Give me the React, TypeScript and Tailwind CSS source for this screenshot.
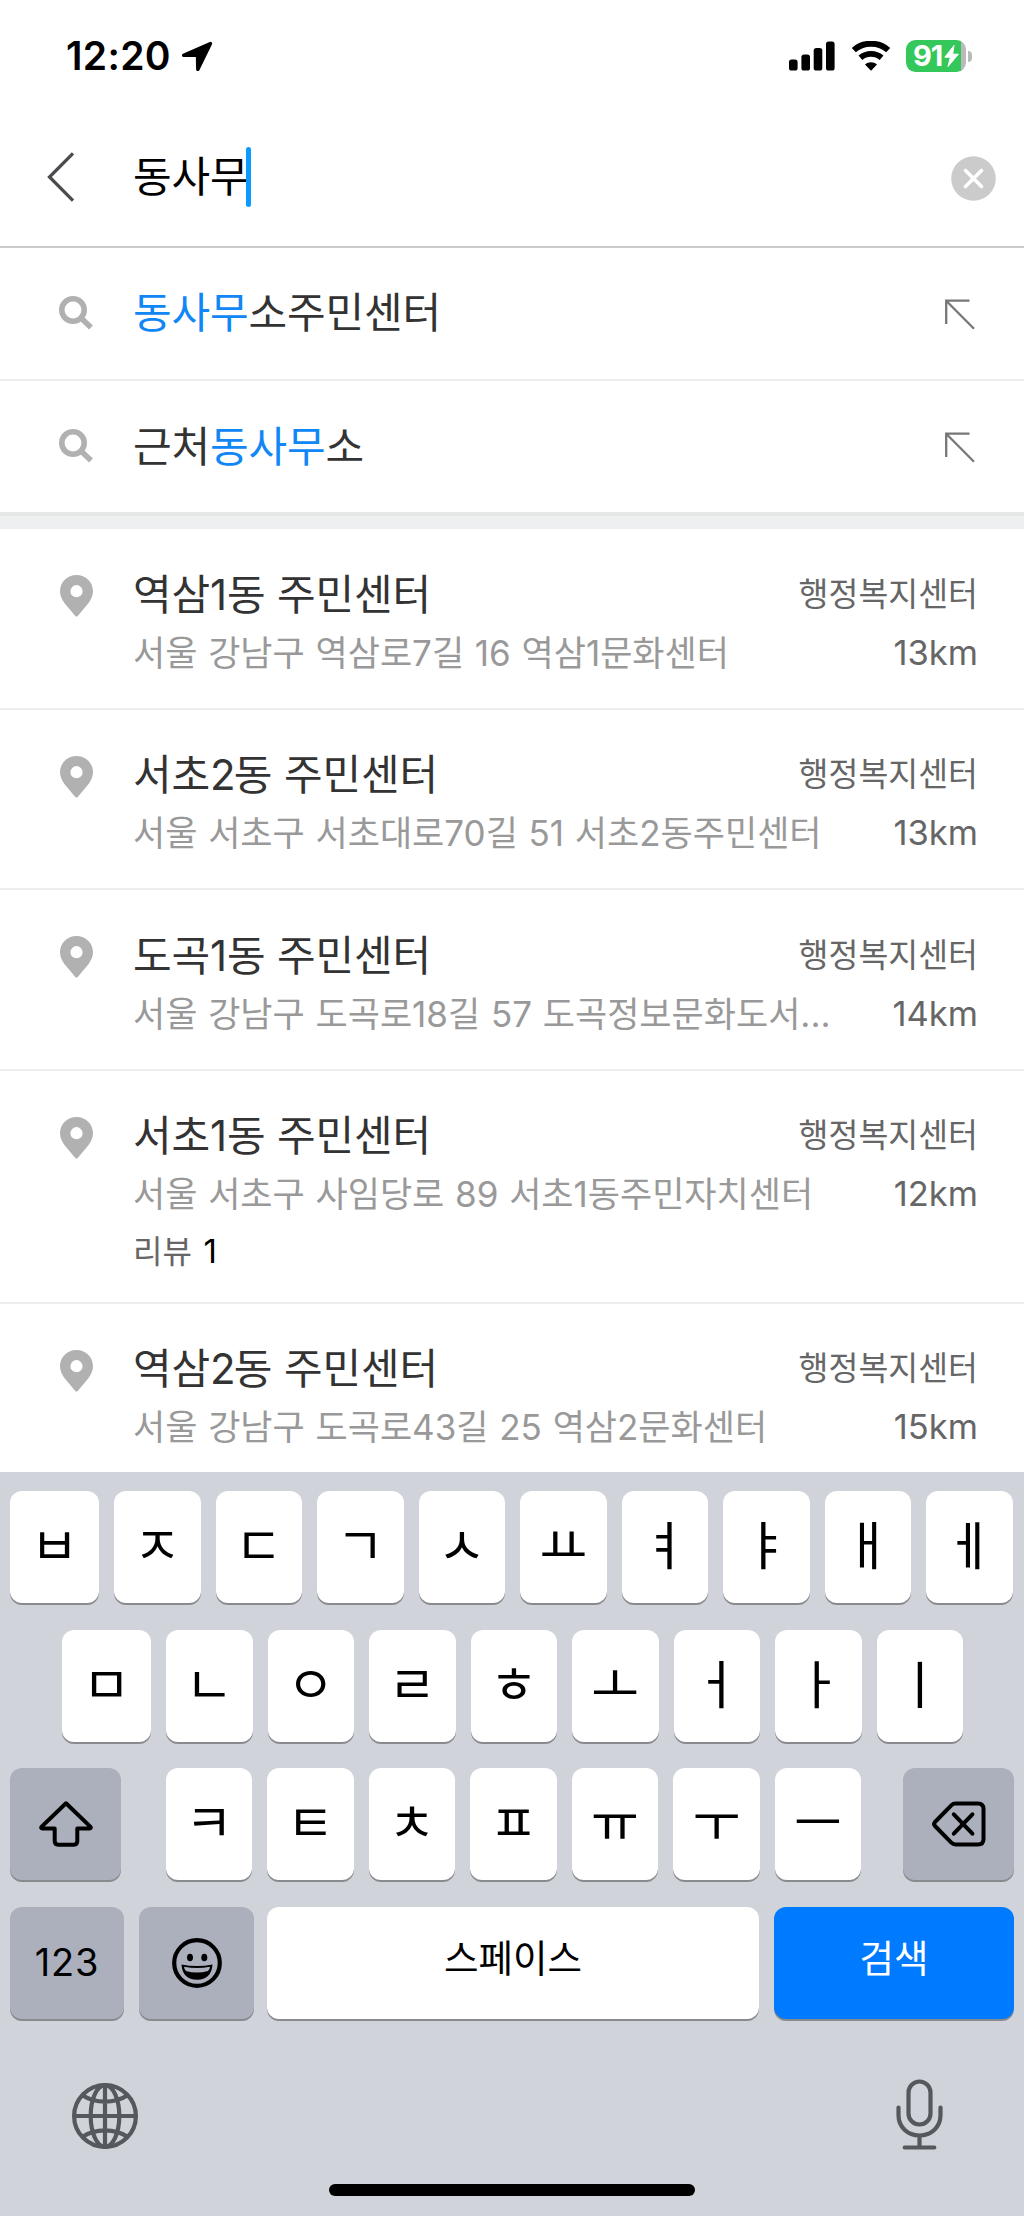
import React from "react";

type Place = {
  name: string;
  address: string;
  distance: string;
  reviews?: number;
};

const places: Place[] = [
  { name: "역삼1동 주민센터", address: "서울 강남구 역삼로7길 16 역삼1문화센터", distance: "13km" },
  { name: "서초2동 주민센터", address: "서울 서초구 서초대로70길 51 서초2동주민센터", distance: "13km" },
  { name: "도곡1동 주민센터", address: "서울 강남구 도곡로18길 57 도곡정보문화도서...", distance: "14km" },
  { name: "서초1동 주민센터", address: "서울 서초구 사임당로 89 서초1동주민자치센터", distance: "12km", reviews: 1 },
  { name: "역삼2동 주민센터", address: "서울 강남구 도곡로43길 25 역삼2문화센터", distance: "15km" },
];

const suggestions = [
  [
    { text: "동사무", hit: true },
    { text: "소주민센터", hit: false },
  ],
  [
    { text: "근처", hit: false },
    { text: "동사무", hit: true },
    { text: "소", hit: false },
  ],
];

function StatusBar() {
  return (
    <div className="flex h-[112px] items-start justify-between pl-[66px] pr-[52px] pt-[36px]">
      <div className="flex h-10 items-center">
        <span className="w-[115px] whitespace-nowrap text-[39px] font-semibold leading-10 tracking-[0.3px] text-black">12:20</span>
        <svg width="32" height="32" viewBox="0 0 32 32" className="mt-px">
          <path d="M29.5 2.5 2.6 14.4h13.9l.3 14L29.5 2.5z" fill="#000" stroke="#000" strokeWidth="3.4" strokeLinejoin="round" />
        </svg>
      </div>
      <div className="flex h-10 items-center">
        <svg width="46" height="30" viewBox="0 0 46 30" className="mr-4">
          <rect x="0" y="18.5" width="8.6" height="11" rx="2.6" />
          <rect x="12.4" y="13.5" width="8.6" height="16" rx="2.6" />
          <rect x="24.7" y="7" width="8.6" height="22.500" rx="2.6" />
          <rect x="37" y="0.500" width="8.6" height="29" rx="2.6" />
        </svg>
        <svg width="40" height="30" viewBox="0 0 40 30" className="mr-[15px]">
          <path d="M2.800 9.100 C12 .6 28 .6 37.200 9.100" fill="none" stroke="#000" strokeWidth="6" />
          <path d="M9.400 16.700 C15.500 11.500 24.500 11.500 30.600 16.700" fill="none" stroke="#000" strokeWidth="5.800" />
          <path d="M14 23.600C17.500 20.400 22.500 20.400 26 23.600L20 29.800Z" />
        </svg>
        <div className="flex h-8 w-[60px] items-center rounded-[9.500px] bg-[linear-gradient(to_right,#34c759_0_55px,#b9bbbb_55px)] pl-[7px]">
          <span className="w-[31px] whitespace-nowrap text-[29px] font-bold leading-8 tracking-[-1px] text-white">91</span>
          <svg width="15" height="22" viewBox="0 0 15 22">
            <path d="M10 .5.800 12.200h5.600L4 21.500 14.400 9.200H8.600z" fill="#fff" stroke="#fff" strokeLinejoin="round" />
          </svg>
        </div>
        <div className="ml-[2px] h-[11px] w-[4px] rounded-r-full bg-[#b9bbbb]" />
      </div>
    </div>
  );
}

function SearchHeader() {
  return (
    <div className="flex h-[136px] items-center border-b-2 border-[#cbcbcb] pb-[4px] pl-[46px] pr-[28px]">
      <svg width="30" height="52" viewBox="0 0 30 52" className="mr-[57px]">
        <path d="M27 2.300 3.500 26 27 49.700" fill="none" stroke="#4b4c50" strokeWidth="3.300" />
      </svg>
      <div className="flex flex-1 items-center">
        <span className="w-[113px] whitespace-nowrap text-[42px] leading-[60px] tracking-[-0.140px] text-black">동사무</span>
        <span className="h-[60px] w-[5px] rounded-full bg-[#0a9bff]" />
      </div>
      <svg width="45" height="45" viewBox="0 0 45 45" className="mt-[3px]">
        <circle cx="22.500" cy="22.500" r="22.300" fill="#cbcbcb" />
        <path d="m14.500 14.500 16 16m0-16-16 16" stroke="#fff" strokeWidth="3.600" strokeLinecap="round" />
      </svg>
    </div>
  );
}

function SuggestionRow({ parts, last }: { parts: { text: string; hit: boolean }[]; last: boolean }) {
  return (
    <div className={`flex items-center pl-[59px] pr-[48px] ${last ? "h-[131px]" : "h-[133.500px] border-b-[2.500px] border-[#ededee]"}`}>
      <svg width="35" height="35" viewBox="0 0 35 35" className="mr-[39px]">
        <circle cx="14" cy="14" r="11.200" fill="none" stroke="#b1b1b1" strokeWidth="5.600" />
        <path d="m22 22 10 9.600" stroke="#b1b1b1" strokeWidth="5.600" />
      </svg>
      <span className="flex-1 whitespace-nowrap text-[42px] leading-[60px] tracking-[-0.140px] text-[#333]">
        {parts.map((p, i) => (
          <span key={i} className={p.hit ? "text-[#1187f5]" : ""}>{p.text}</span>
        ))}
      </span>
      <svg width="32" height="32" viewBox="0 0 32 32" className="mt-[3px]">
        <path d="M25.500 1.700H2.200V25M2.200 1.700 30 29.800" fill="none" stroke="#777" strokeWidth="2.300" />
      </svg>
    </div>
  );
}

function PlaceName({ name }: { name: string }) {
  return (
    <span className="text-[42px] leading-[58px] tracking-[-0.150px] text-[#333]">
      {name.split(/(2)/).map((part, i) => (
        <span key={i} className={part === "2" ? "tracking-[-1.800px]" : ""}>{part}</span>
      ))}
    </span>
  );
}

function PlaceRow({ place }: { place: Place }) {
  return (
    <div
      className={`flex shrink-0 border-b-[2.500px] border-[#ededee] pl-[60px] pr-[46px] pt-[36.500px] ${place.reviews ? "h-[233px]" : "h-[180.500px]"}`}
    >
      <svg width="33" height="42" viewBox="0 0 33 42" className="mr-[40px] mt-[9.500px] shrink-0">
        <path
          d="M16.500 0C7.300 0 0 7.200 0 16.200c0 4.600 2 8.400 4.600 12L15.300 41q1.200 1 2.400 0L28.400 28.200c2.600-3.600 4.600-7.400 4.600-12C33 7.200 25.700 0 16.500 0Zm0 10.100a6.100 6.100 0 1 1 0 12.200a6.100 6.100 0 0 1 0-12.200Z"
          fill="#b1b1b1"
        />
      </svg>
      <div className="flex-1 whitespace-nowrap">
        <div className="flex justify-between">
          <PlaceName name={place.name} />
          <span className="text-[32.500px] leading-[58px] text-[#666]">행정복지센터</span>
        </div>
        <div className="flex justify-between">
          <span className="text-[35px] leading-[58px] text-[#999] [word-spacing:0.900px]">{place.address}</span>
          <span className="text-[34.500px] leading-[58px] text-[#666]">{place.distance}</span>
        </div>
        {place.reviews ? (
          <div className="text-[32px] leading-[56px] text-[#666] [word-spacing:2.500px]">
            리뷰 <span className="text-[33px] text-black">{place.reviews}</span>
          </div>
        ) : null}
      </div>
    </div>
  );
}

const keyBase = "flex h-[112px] items-center justify-center rounded-[12px] shadow-[0_2px_0_#898a8d]";

function JamoKey({ label, wide }: { label: string; wide?: boolean }) {
  return (
    <div className={`${keyBase} bg-white text-[52px] text-black ${wide ? "w-[89px]" : "w-[86.500px]"}`}>
      <span className="leading-none">{label}</span>
    </div>
  );
}

function Keyboard() {
  return (
    <div className="flex h-[744px] shrink-0 flex-col bg-[#d0d3da] pt-[19px]">
      <div className="flex gap-[15px] pl-[10px]">
        {[..."ㅂㅈㄷㄱㅅㅛㅕㅑㅐㅔ"].map((k, i) => (
          <JamoKey key={k} label={k} wide={i === 0} />
        ))}
      </div>
      <div className="mt-[26.500px] flex gap-[15px] pl-[62px]">
        {[..."ㅁㄴㅇㄹㅎㅗㅓㅏㅣ"].map((k, i) => (
          <JamoKey key={k} label={k} wide={i === 0} />
        ))}
      </div>
      <div className="mt-[26.500px] flex justify-between pl-[10px] pr-[10px]">
        <div className={`${keyBase} w-[111px] bg-[#abb0bc]`}>
          <svg width="54" height="46" viewBox="0 0 54 46">
            <path
              d="M27 2.300 2.700 25.600c-.9 1-.5 1.900.8 1.900h12.200v12.600c0 2.500 1 3.600 3.400 3.600h15.800c2.400 0 3.400-1.100 3.400-3.600V27.500h12.200c1.300 0 1.700-.9.800-1.900z"
              fill="none"
              stroke="#000"
              strokeWidth="4"
              strokeLinejoin="round"
            />
          </svg>
        </div>
        <div className="flex gap-[15px] pl-[3px]">
          {[..."ㅋㅌㅊㅍㅠㅜㅡ"].map((k) => (
            <JamoKey key={k} label={k} />
          ))}
        </div>
        <div className={`${keyBase} w-[111px] bg-[#abb0bc]`}>
          <svg width="54" height="46" viewBox="0 0 54 46" fill="none" stroke="#000" strokeWidth="4" strokeLinecap="round" strokeLinejoin="round">
            <path d="M23.500 2.600H46q5.500 0 5.500 5.500v29.800q0 5.500-5.500 5.500H23.500q-2.500 0-4.200-1.700L3 25q-1.800-2 0-4L19.300 4.300q1.700-1.700 4.200-1.700Z" />
            <path d="m21.800 13.300 18.600 19.400m0-19.400L21.800 32.700" />
          </svg>
        </div>
      </div>
      <div className="mt-[27px] flex pl-[10px] pr-[10px]">
        <div className={`${keyBase} w-[114px] bg-[#abb0bc] pb-[2px] text-[38px] tracking-[0.800px] text-black`}>123</div>
        <div className={`${keyBase} ml-[15px] w-[115px] bg-[#abb0bc]`}>
          <svg width="50" height="50" viewBox="0 0 50 50">
            <circle cx="25" cy="25" r="22.800" fill="none" stroke="#000" strokeWidth="4.200" />
            <ellipse cx="18" cy="19.500" rx="3" ry="3.800" />
            <ellipse cx="32.300" cy="19.500" rx="3" ry="3.800" />
            <path d="M9.500 26.500Q25 29.500 40.500 26.500Q39.500 41.500 25 41.800Q10.500 41.500 9.500 26.500Z" />
            <path d="M12 28.700Q25 31.300 38 28.700Q37.800 31.500 36 33Q25 36 14 33Q12.200 31.500 12 28.700Z" fill="#abb0bc" />
          </svg>
        </div>
        <div className={`${keyBase} ml-[13px] w-[492px] bg-white pb-[7px] text-[37.500px] text-black`}>스페이스</div>
        <div className={`${keyBase} ml-[15px] w-[240px] bg-[#007aff] pb-[7px] text-[37.500px] text-white`}>검색</div>
      </div>
      <div className="mt-[58px] flex items-start justify-between pl-[72px] pr-[80px]">
        <svg width="66" height="66" viewBox="0 0 66 66" className="mt-[6px]" fill="none" stroke="#55585d" strokeWidth="4.200">
          <circle cx="33" cy="33" r="30.900" />
          <ellipse cx="33" cy="33" rx="14.300" ry="30.900" />
          <path d="M33 2v62M2 33h62M10.500 12.200Q20 18.600 33 18.600T55.500 12.200M10.500 53.800Q20 47.400 33 47.400T55.500 53.800" />
        </svg>
        <svg width="49" height="72" viewBox="0 0 49 72" className="mt-px" fill="none" stroke="#55585d" strokeWidth="4.200" strokeLinecap="round">
          <rect x="13.500" y="3.500" width="22" height="43" rx="11" />
          <path d="M3.500 29.500v7.500c0 12 9 20.500 21 20.500s21-8.500 21-20.500v-7.500M24.500 57.500v12M9.700 69.500h29.600" />
        </svg>
      </div>
      <div className="mx-auto mt-[34px] h-[12px] w-[366px] rounded-full bg-black" />
    </div>
  );
}

export default function App() {
  return (
    <div className="flex h-[2216px] w-[1024px] flex-col overflow-hidden bg-white font-['Inter','Noto_Sans_CJK_KR',sans-serif]">
      <StatusBar />
      <SearchHeader />
      {suggestions.map((parts, i) => (
        <SuggestionRow key={i} parts={parts} last={i === suggestions.length - 1} />
      ))}
      <div className="h-[17px] shrink-0 border-t-[4px] border-[#e5e7e7] bg-[#edeff1]" />
      <div className="flex h-[943px] shrink-0 flex-col overflow-hidden">
        {places.map((p) => (
          <PlaceRow key={p.name} place={p} />
        ))}
      </div>
      <Keyboard />
    </div>
  );
}
